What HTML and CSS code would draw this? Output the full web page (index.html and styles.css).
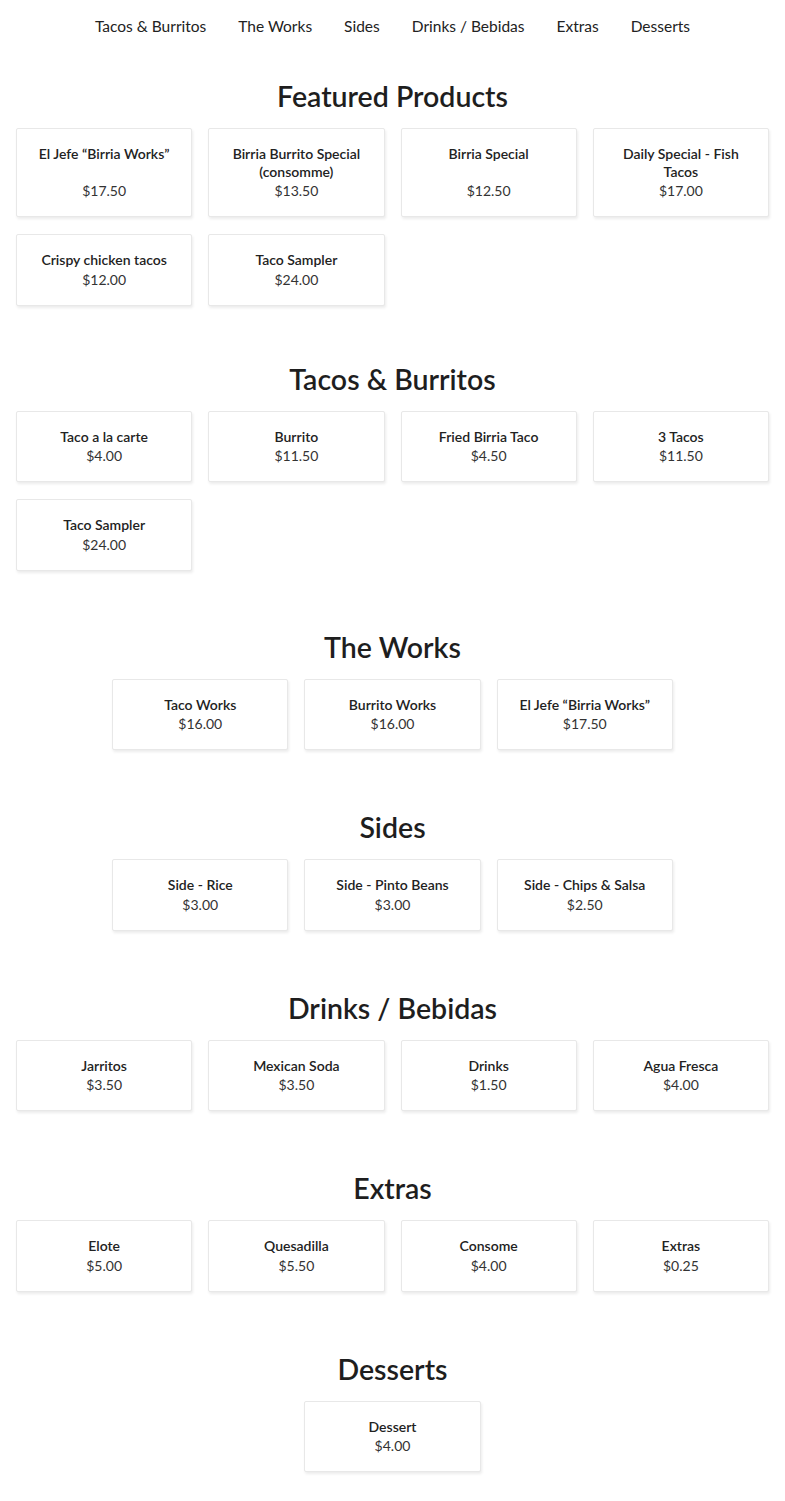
FILE: index.html
```html
<!DOCTYPE html>
<html lang="en">
<head>
<meta charset="utf-8">
<title>Menu</title>
<link rel="stylesheet" href="styles.css">
</head>
<body>
<nav class="nav">
  <a href="#tacos">Tacos &amp; Burritos</a>
  <a href="#works">The Works</a>
  <a href="#sides">Sides</a>
  <a href="#drinks">Drinks / Bebidas</a>
  <a href="#extras">Extras</a>
  <a href="#desserts">Desserts</a>
</nav>
<main class="menu">
  <section class="section section-featured">
    <h2 class="section-title">Featured Products</h2>
    <div class="grid">
      <div class="card"><div class="name">El Jefe “Birria Works”</div><div class="price">$17.50</div></div>
      <div class="card"><div class="name">Birria Burrito Special (consomme)</div><div class="price">$13.50</div></div>
      <div class="card"><div class="name">Birria Special</div><div class="price">$12.50</div></div>
      <div class="card"><div class="name">Daily Special - Fish Tacos</div><div class="price">$17.00</div></div>
      <div class="card"><div class="name">Crispy chicken tacos</div><div class="price">$12.00</div></div>
      <div class="card"><div class="name">Taco Sampler</div><div class="price">$24.00</div></div>
    </div>
  </section>
  <section class="section section-tacos" id="tacos">
    <h2 class="section-title">Tacos &amp; Burritos</h2>
    <div class="grid">
      <div class="card"><div class="name">Taco a la carte</div><div class="price">$4.00</div></div>
      <div class="card"><div class="name">Burrito</div><div class="price">$11.50</div></div>
      <div class="card"><div class="name">Fried Birria Taco</div><div class="price">$4.50</div></div>
      <div class="card"><div class="name">3 Tacos</div><div class="price">$11.50</div></div>
      <div class="card"><div class="name">Taco Sampler</div><div class="price">$24.00</div></div>
    </div>
  </section>
  <section class="section" id="works">
    <h2 class="section-title">The Works</h2>
    <div class="grid grid-center">
      <div class="card"><div class="name">Taco Works</div><div class="price">$16.00</div></div>
      <div class="card"><div class="name">Burrito Works</div><div class="price">$16.00</div></div>
      <div class="card"><div class="name">El Jefe “Birria Works”</div><div class="price">$17.50</div></div>
    </div>
  </section>
  <section class="section" id="sides">
    <h2 class="section-title">Sides</h2>
    <div class="grid grid-center">
      <div class="card"><div class="name">Side - Rice</div><div class="price">$3.00</div></div>
      <div class="card"><div class="name">Side - Pinto Beans</div><div class="price">$3.00</div></div>
      <div class="card"><div class="name">Side - Chips &amp; Salsa</div><div class="price">$2.50</div></div>
    </div>
  </section>
  <section class="section" id="drinks">
    <h2 class="section-title">Drinks / Bebidas</h2>
    <div class="grid">
      <div class="card"><div class="name">Jarritos</div><div class="price">$3.50</div></div>
      <div class="card"><div class="name">Mexican Soda</div><div class="price">$3.50</div></div>
      <div class="card"><div class="name">Drinks</div><div class="price">$1.50</div></div>
      <div class="card"><div class="name">Agua Fresca</div><div class="price">$4.00</div></div>
    </div>
  </section>
  <section class="section" id="extras">
    <h2 class="section-title">Extras</h2>
    <div class="grid">
      <div class="card"><div class="name">Elote</div><div class="price">$5.00</div></div>
      <div class="card"><div class="name">Quesadilla</div><div class="price">$5.50</div></div>
      <div class="card"><div class="name">Consome</div><div class="price">$4.00</div></div>
      <div class="card"><div class="name">Extras</div><div class="price">$0.25</div></div>
    </div>
  </section>
  <section class="section" id="desserts">
    <h2 class="section-title">Desserts</h2>
    <div class="grid grid-center">
      <div class="card"><div class="name">Dessert</div><div class="price">$4.00</div></div>
    </div>
  </section>
</main>
</body>
</html>
```
FILE: styles.css
```css
* { box-sizing: border-box; }
body {
  margin: 0;
  background: #fff;
  color: #222;
  font-family: Lato, "Liberation Sans", sans-serif;
}
.nav {
  display: flex;
  justify-content: center;
  gap: 32px;
  padding: 15px 16px 0;
  height: 79px;
}
.nav a {
  color: #222;
  text-decoration: none;
  font-size: 15.5px;
  line-height: 22px;
}
.menu {
  padding: 0 16px 29px;
}
.section { margin-bottom: 60px; }
.section-featured { margin-bottom: 56px; }
.section-tacos { margin-bottom: 59px; }
.section:last-child { margin-bottom: 0; }
.section-title {
  margin: 0 0 15px;
  text-align: center;
  font-size: 28.5px;
  line-height: 34px;
  font-weight: 600;
  color: #1e1e1e;
}
.grid {
  display: flex;
  flex-wrap: wrap;
  gap: 17px 16px;
}
.grid-center { justify-content: center; }
.card {
  width: calc((100% - 48px) / 4);
  display: flex;
  flex-direction: column;
  align-items: center;
  text-align: center;
  padding: 16px 16px 16px;
  background: #fff;
  border: 1px solid #e8e8e8;
  border-radius: 2px;
  box-shadow: 1px 2px 3px rgba(0, 0, 0, 0.08);
  min-height: 71.5px;
}
.name {
  flex-grow: 1;
  font-size: 14px;
  line-height: 18px;
  font-weight: 600;
  color: #222;
}
.price {
  font-size: 14px;
  line-height: 19px;
  color: #333;
}
```
